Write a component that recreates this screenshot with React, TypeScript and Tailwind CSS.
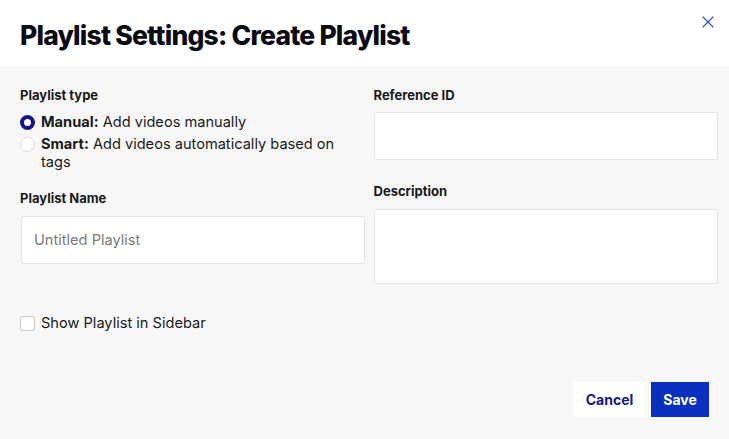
import { X } from "lucide-react";

export default function App() {
  return (
    <div className="h-[439px] w-[729px] bg-[#f7f7f7] font-['Inter',sans-serif] text-[#1a1a1a]">
      <div className="flex h-[66px] items-start justify-between bg-white pl-5 pr-[11px]">
        <h1 className="mt-[16px] text-[26.5px] font-extrabold tracking-[-0.03em] text-[#0b0b14]">
          Playlist Settings: Create Playlist
        </h1>
        <button className="mt-[12px] text-[#3050c8]" aria-label="Close">
          <X size={20} strokeWidth={1.4} />
        </button>
      </div>

      <div className="flex flex-col pl-5 pr-[11px] pt-[21px]">
        <div className="grid grid-cols-2 gap-x-[9px]">
          <div className="flex flex-col">
            <label className="text-[13px] font-bold leading-4">Playlist type</label>
            <div className="mt-[10px] flex items-center gap-[6px] text-[14.6px] leading-[19px]">
              <span className="box-border h-[15px] w-[15px] rounded-full border-[4px] border-[#141487] bg-white" />
              <span>
                <b className="font-bold">Manual:</b> Add videos manually
              </span>
            </div>
            <div className="mt-[3px] flex items-start gap-[6px] text-[14.6px] leading-[18px]">
              <span className="mt-[2px] box-border h-[15px] w-[15px] shrink-0 rounded-full border border-[#dcdcdc] bg-white" />
              <div className="flex flex-col">
                <span>
                  <b className="font-bold">Smart:</b> Add videos automatically based on
                </span>
                <span>tags</span>
              </div>
            </div>
            <label className="mt-[19px] text-[13px] font-bold leading-4">Playlist Name</label>
            <input
              className="mt-[10px] ml-px h-[48px] rounded-[3px] border border-[#e3e3e3] bg-white px-3 text-[14.6px] placeholder:text-[#7a7a7a] outline-none"
              placeholder="Untitled Playlist"
            />
          </div>
          <div className="flex flex-col">
            <label className="text-[13px] font-bold leading-4">Reference ID</label>
            <input className="mt-[9px] h-[48px] rounded-[3px] border border-[#e3e3e3] bg-white outline-none" />
            <label className="mt-[23px] text-[13px] font-bold leading-4">Description</label>
            <textarea className="mt-[10px] h-[75px] resize-none rounded-[3px] border border-[#e3e3e3] bg-white outline-none" />
          </div>
        </div>

        <label className="mt-[29px] flex items-center gap-[6px] text-[14.6px]">
          <span className="box-border h-[15px] w-[15px] rounded-[2px] border border-[#c8c8c8] bg-white" />
          Show Playlist in Sidebar
        </label>

        <div className="mt-[47px] mr-[9px] flex justify-end gap-[5px]">
          <button className="h-[35px] w-[73px] bg-white text-[14px] font-bold text-[#16178a]">Cancel</button>
          <button className="h-[35px] w-[58px] bg-[#0a2fbe] text-[14px] font-bold text-white">Save</button>
        </div>
      </div>
    </div>
  );
}
